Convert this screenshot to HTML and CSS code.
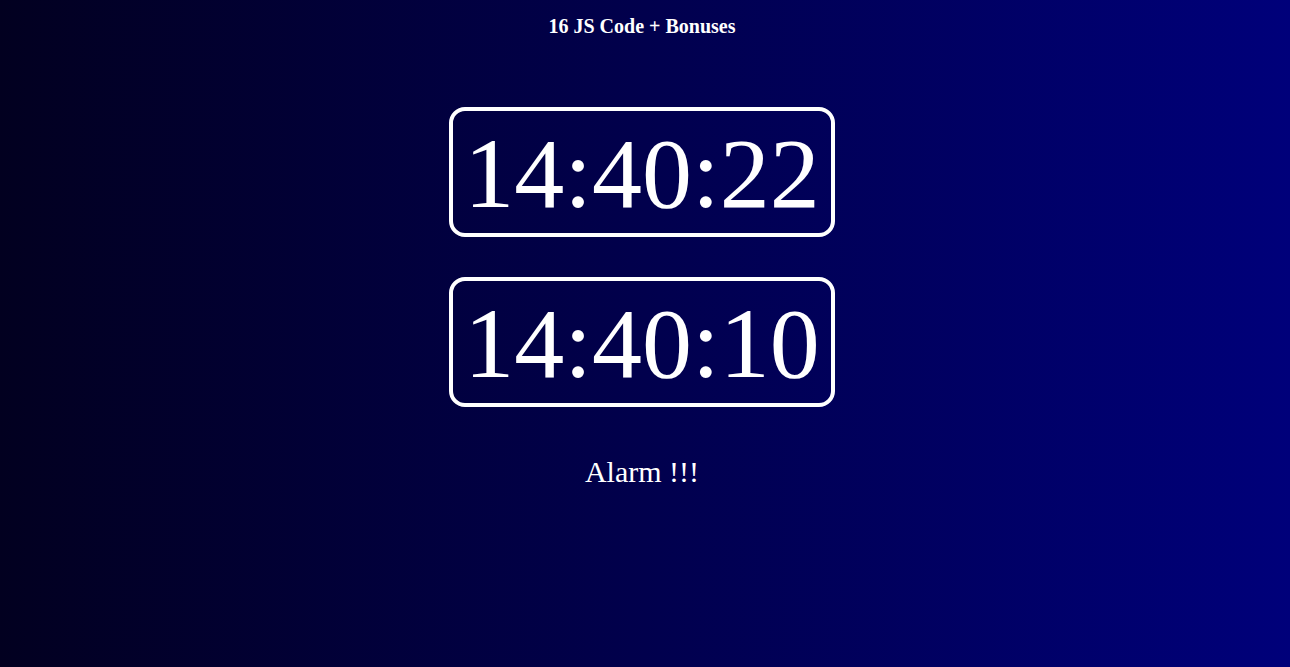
FILE: index.html
```html
<!DOCTYPE html>
<html lang="en">
<head>
<meta charset="utf-8">
<title>16 JS Code + Bonuses</title>
<link rel="stylesheet" href="styles.css">
</head>
<body>
<main class="page">
  <h1 class="title">16 JS Code + Bonuses</h1>
  <div class="clocks">
    <div class="clock">14:40:22</div>
    <div class="clock">14:40:10</div>
  </div>
  <p class="alarm">Alarm !!!</p>
</main>
</body>
</html>
```
FILE: styles.css
```css
html, body {
  margin: 0;
  padding: 0;
  height: 100%;
}
body {
  background: linear-gradient(to right, #020020, #00007a);
  color: #ffffff;
  font-family: "Liberation Serif", "Times New Roman", serif;
}
.page {
  display: flex;
  flex-direction: column;
  align-items: center;
  padding-right: 6px;
  min-height: 100%;
  box-sizing: border-box;
}
.title {
  margin: 15px 0 0;
  font-size: 20px;
  font-weight: bold;
  line-height: 23px;
}
.clocks {
  display: flex;
  flex-direction: column;
  align-items: center;
  gap: 40px;
  margin-top: 69px;
}
.clock {
  border: 4px solid #ffffff;
  border-radius: 16px;
  padding: 5px 11px 2px 11px;
  font-size: 100px;
  line-height: 115px;
  width: 356px;
  text-align: center;
}
.alarm {
  margin: 47px 0 0;
  font-size: 30px;
  line-height: 35px;
}
```
